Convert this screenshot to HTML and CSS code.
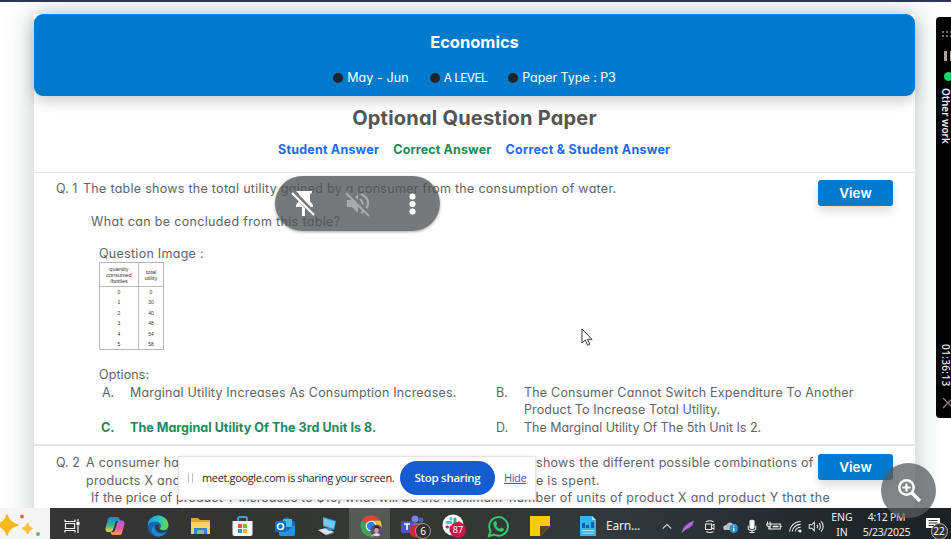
FILE: index.html
```html
<!DOCTYPE html>
<html lang="en">
<head>
<meta charset="utf-8">
<title>Economics – Optional Question Paper</title>
<link rel="stylesheet" href="styles.css">
</head>
<body>
<div class="screen">
  <div class="topline"></div>
  <main class="viewport">
    <article class="paper">
      <header class="banner">
        <h1>Economics</h1>
        <ul class="meta">
          <li class="m1"><span>May - Jun</span></li>
          <li class="m2"><span>A LEVEL</span></li>
          <li class="m3"><span>Paper Type : P3</span></li>
        </ul>
      </header>
      <section class="intro">
        <h2><span>Optional Question Paper</span></h2>
        <div class="legend">
          <span class="blue l1">Student Answer</span>
          <span class="green l2">Correct Answer</span>
          <span class="blue l3">Correct &amp; Student Answer</span>
        </div>
      </section>
      <section class="question">
        <div class="qhead">
          <span class="num n1">Q. 1</span>
          <div class="qtext"><p><span class="t1">The table shows the total utility gained by a consumer from the consumption of water.</span></p>
          <p class="sub"><span class="t2">What can be concluded from this table?</span></p></div>
          <button class="view">View</button>
        </div>
        <div class="qbody">
          <p class="label"><span class="t3">Question Image :</span></p>
          <div class="figure">
            <div class="fcol"><div class="fh">quantity<br>consumed<br>/bottles</div><i>0</i><i>1</i><i>2</i><i>3</i><i>4</i><i>5</i></div>
            <div class="fcol"><div class="fh">total<br>utility</div><i>0</i><i>30</i><i>40</i><i>48</i><i>54</i><i>58</i></div>
          </div>
          <p class="optlabel"><span class="t4">Options:</span></p>
          <div class="options">
            <b class="key">A.</b><p><span class="oa">Marginal Utility Increases As Consumption Increases.</span></p>
            <b class="key">B.</b><p><span class="ob">The Consumer Cannot Switch Expenditure To Another</span><br><span class="ob2">Product To Increase Total Utility.</span></p>
            <b class="key right">C.</b><p class="right"><span class="oc">The Marginal Utility Of The 3rd Unit Is 8.</span></p>
            <b class="key">D.</b><p><span class="od">The Marginal Utility Of The 5th Unit Is 2.</span></p>
          </div>
        </div>
      </section>
      <section class="question second">
        <div class="qhead">
          <span class="num n2">Q. 2</span>
          <div class="qtext">
            <p class="split"><span class="s1">A consumer has</span><span class="s2">shows the different possible combinations of</span></p>
            <p class="split"><span class="s3">products X and</span><span class="s4">e is spent.</span></p>
            <p class="split third"><span class="s5">If the price of product Y increases to $10, what will be the maximum</span><span class="s6">number of units of product X and product Y that the</span></p>
          </div>
          <button class="view">View</button>
        </div>
      </section>
    </article>
  </main>

  <footer class="taskbar">
    <div class="sparkle"><svg width="50" height="31" viewBox="0 0 50 31"><path d="M7 7Q9 15 18 17Q9 19 7 27Q5 19-4 17Q5 15 7 7Z" fill="#f8b91b" stroke="#f8b91b" stroke-width="1.500" stroke-linejoin="round"/><path d="M27.500 15Q28.500 19 32.500 20.500Q28.500 22 27.500 26Q26.500 22 22 20.500Q26.500 19 27.500 15Z" fill="#f8c13b" stroke="#f8c13b" stroke-linejoin="round"/><circle cx="22" cy="8.500" r="2" fill="#e66a42"/><circle cx="38" cy="26" r="2" fill="#6cb75a"/></svg></div>
    <div class="app"><svg width="18" height="18" viewBox="0 0 18 18" fill="none" stroke="#f2f2f2" stroke-width="1.200"><path d="M2 2.500V4.500H12V2.500M2 15.500V13.500H12V15.500M2.500 6.500H11.500V11.500H2.500ZM15 2V4.500M15 8.500V16"/><rect x="14" y="5.500" width="2" height="2" fill="#fff"/></svg></div>
    <div class="app"><svg width="22" height="22" viewBox="0 0 22 22"><defs><linearGradient id="ca" x1="0" y1="0" x2="0" y2="1"><stop stop-color="#1687dc"/><stop offset=".55" stop-color="#35b58a"/><stop offset="1" stop-color="#f4d22e"/></linearGradient><linearGradient id="cb" x1="0" y1="0" x2="0" y2="1"><stop stop-color="#a463eb"/><stop offset=".55" stop-color="#e85aa0"/><stop offset="1" stop-color="#ff9a53"/></linearGradient></defs><path d="M6 2H13Q15 2 15.500 4L16 6H12L9 15Q8 17 6 17H4Q1 17 1.500 13L4 4Q4.500 2 6 2Z" fill="url(#ca)"/><path d="M16 20H9Q7 20 6.500 17H9Q10.500 17 11 15L13.500 7Q14 5.500 16 5.500H18Q21 6 20.500 9L18 18Q17.500 20 16 20Z" fill="url(#cb)"/></svg></div>
    <div class="app"><svg width="22" height="22" viewBox="0 0 22 22"><defs><linearGradient id="ea" x1="0" y1="0" x2="1" y2=".2"><stop stop-color="#1b9be3"/><stop offset=".5" stop-color="#24c0d2"/><stop offset="1" stop-color="#64d64e"/></linearGradient></defs><circle cx="11" cy="11" r="10.500" fill="#1266b8"/><path d="M.7 10C1.500 4 6 .5 11 .5C17 .5 21.500 5 21.500 10C21.500 13.500 19 15 16 15C13 15 12.500 13.500 13.500 12.500C15 10 12.500 6.500 8.500 6.500C5 6.500 2 7.500.7 10Z" fill="url(#ea)"/><path d="M8 10C6 14 9 18.500 14 18.500C16.500 18.500 18 18 19.500 17C17 21 13 21.800 10 21.400C4 20 3 12 8 10Z" fill="#198bd2"/><path d="M8.500 10C7.500 14 10 17.500 14.500 17.500Q17.500 17.500 20 16L19.500 15Q16 16.500 13.500 15Q11 13 12 10Z" fill="#343733"/></svg></div>
    <div class="app"><svg width="21" height="19" viewBox="0 0 21 19"><path d="M1 1H8L10 3H20V17H1Z" fill="#dfa52e"/><path d="M1 5H20V17H1Z" fill="#fbd365"/><path d="M4 17V11H17V17H14V13.500H7V17Z" fill="#3088d0"/><path d="M7 14H14V17H7Z" fill="#76b8e8"/></svg></div>
    <div class="app"><svg width="21" height="21" viewBox="0 0 21 21"><path d="M6 6V2.500Q6 1 8 1H13Q15 1 15 2.500V6" fill="none" stroke="#39a6e6" stroke-width="1.800"/><path d="M.5 5H20.500V18Q20.500 20 18.500 20H2.500Q.5 20 .5 18Z" fill="#f5f5f5"/><path fill="#ed5333" d="M6 8h4v4H6z"/><path fill="#80b938" d="M11 8h4v4h-4z"/><path fill="#1d9ce5" d="M6 13h4v4H6z"/><path fill="#f8b61b" d="M11 13h4v4h-4z"/></svg></div>
    <div class="app"><svg width="22" height="21" viewBox="0 0 22 21"><path d="M6 5L13 1L21 6V18Q21 20 19 20H7Q5 20 5 18Z" fill="#1269bd"/><path d="M9 3H18V11H9Z" fill="#48b8ed"/><path d="M5 11L13 15L21 9V18Q21 20 19 20H7Q5 20 5 18Z" fill="#2295df"/><rect x="1" y="5" width="11" height="11" rx="1.500" fill="#106bbd"/><circle cx="6.500" cy="10.500" r="3" fill="none" stroke="#fff" stroke-width="1.700"/></svg></div>
    <div class="app"><svg width="22" height="20" viewBox="0 0 22 20"><path d="M6 1L19 5L17 14L6 10Z" fill="#3cade4"/><path d="M7 2.500L18 6L16.500 12.500L7 9Z" fill="#6bccf6"/><path d="M1 14L9 12L17 16L9 19Z" fill="#dbe4ea"/><path d="M9 19L17 16V17L9 19.500Z" fill="#7d8b96"/><path d="M8 12H13L15 14L12 15Z" fill="#338dca"/></svg></div>
    <div class="app active"><svg width="24" height="24" viewBox="0 0 24 24"><circle cx="11" cy="12" r="10.500" fill="#35a853"/><path d="M11 12L1.900 6.700A10.500 10.500 0 0 1 20.100 6.700H11Z" fill="#e94235"/><path d="M11 6.700H20.200A10.500 10.500 0 0 1 11 22.500L15.600 14.500Z" fill="#fbc02d"/><circle cx="11" cy="12" r="5.300" fill="#fff"/><circle cx="11" cy="12" r="4.200" fill="#327de6"/><circle cx="16.500" cy="16.500" r="6" fill="#574d80"/><path d="M12.500 21Q16.500 17 20.500 21Q17 23.500 12.500 21Z" fill="#e5d8e7"/><ellipse cx="16.500" cy="16" rx="2.200" ry="3" fill="#d7a084"/><path d="M14 15Q14 11.500 17 12Q19.500 12 19 15Q17 13 14 15Z" fill="#272130"/></svg></div>
    <div class="app teams"><svg width="30" height="24" viewBox="0 0 30 24"><circle cx="16" cy="5" r="3.500" fill="#7b83eb"/><circle cx="22" cy="6" r="2.500" fill="#5059c9"/><path d="M10 9H24V15Q23 20 17 20Q11 20 10 15Z" fill="#6870d5"/><rect x="2" y="7" width="12" height="12" rx="1" fill="#4b53bc"/><path d="M5 10H11M8 10V16" stroke="#fff" stroke-width="1.600"/><circle cx="17" cy="17" r="6.500" fill="#cf2936"/></svg><span class="count">6</span></div>
    <div class="app slack"><svg width="24" height="24" viewBox="0 0 24 24"><circle cx="11" cy="11" r="10.500" fill="#fff"/><g fill="none" stroke-width="3" stroke-linecap="round"><path d="M5 8.500H9M9 4.500V5" stroke="#36c5f0"/><path d="M13 5V9M17 8.500V9" stroke="#2eb67d"/><path d="M13 13H17M13 17V17.500" stroke="#ecb22e"/><path d="M9 13V17M5 13H5.500" stroke="#e01e5a"/></g></svg><span class="count red">87</span></div>
    <div class="app"><svg width="23" height="23" viewBox="0 0 23 23"><path d="M2 21L3.500 16A9.300 9.300 0 1 1 7 19.500Z" fill="none" stroke="#2fcc65" stroke-width="2"/><path d="M7.500 6.300L9 6L10.200 9L9 10.500Q10.500 13 13 14L14.300 12.500L17 14Q16.500 17 14 16.700Q8 16 6.300 9.500Q6 7.500 7.500 6.300Z" fill="#2fcc65"/></svg></div>
    <div class="app"><svg width="20" height="20" viewBox="0 0 20 20"><path d="M0 0H20V10L10 20H0Z" fill="#fccc0b"/><path d="M10 20V10H20Z" fill="#554719"/></svg></div>
    <div class="news"><svg width="18" height="22" viewBox="0 0 18 22"><path d="M1 1H13L17 5V21H1Z" fill="#35b4ed"/><path d="M13 1V5H17Z" fill="#a6e3fb"/><path d="M3 13V8H6V13ZM7 13V10H10V13ZM12 13V7H15V13Z" fill="#0f5eaa"/><path d="M3 15.500H15M3 18H15" stroke="#a3e1fc"/></svg><span>Earn...</span></div>
    <div class="tray">
      <svg class="i1" viewBox="0 0 20 20"><path d="M5 12.500L10 7.500L15 12.500"/></svg>
      <svg class="i2" viewBox="0 0 20 20"><path d="M3 17Q4 8 17 3Q17 11 7 14Z" fill="#a957cf" stroke="none"/><path d="M3 17L14 6" stroke="#d7a4ef" stroke-width=".8"/></svg>
      <svg class="i3" viewBox="0 0 20 20"><path d="M5.500 4.500Q10 2 14.500 4.500M5.500 16Q10 18 14.500 16M5 7H12V13.500H5ZM12 9L15 7.500V13L12 11.500"/></svg>
      <svg class="i4" viewBox="0 0 20 20"><path d="M2 14Q-1 9 5 8Q8 3 13 7Q18 7 18 12L14 14Z" fill="#b9c0c5" stroke="none"/><circle cx="13.500" cy="12.500" r="5" fill="#1f91d4" stroke="none"/><path d="M13.500 11.500V15.500M13.500 9V10.300" stroke="#fff" stroke-width="1.500"/></svg>
      <svg class="i5" viewBox="0 0 20 20"><rect x="7" y="2" width="6" height="11" rx="2" fill="#f4f4f4" stroke="none"/><path d="M5.500 9V12Q5.500 14.500 10 14.500Q14.500 14.500 14.500 12V9M10 14.500V17M7 17H13"/></svg>
      <svg class="i6" viewBox="0 0 20 20"><path d="M7 7H18V13H6V10M19 9V11M3 4V7M6 4V7M2 7H7Q7 10 4.500 10Q2 10 2 7ZM4.500 10V13H6"/><path d="M9 9H16V11H9Z" fill="#eee" stroke="none"/></svg>
      <svg class="i7" viewBox="0 0 20 20"><path d="M3 16A13 13 0 0 1 16 4M6 16A10 10 0 0 1 16 7.500M9.500 16A7 7 0 0 1 16 11M13 16A4 4 0 0 1 16 14"/><circle cx="15.500" cy="15.500" r="1" fill="#fff"/></svg>
      <svg class="i8" viewBox="0 0 20 20"><path d="M2 8H5L8 5V15L5 12H2ZM11 8Q13 10 11 12M13.500 6Q17 10 13.500 14M16 4Q21 10 16 16"/></svg>
      <div class="lang">ENG<br>IN</div>
      <div class="clock">4:12 PM<br>5/23/2025</div>
      <div class="notice"><svg width="15" height="15" viewBox="0 0 15 15"><path d="M0 1H14V11H10V14L7 11H0Z" fill="#fff"/><path d="M2.500 3.500H11.500M2.500 6H11.500M2.500 8.500H8" stroke="#333" stroke-width="1"/></svg><span>22</span></div>
    </div>
  </footer>

  <aside class="timer">
    <svg width="15" height="66" viewBox="0 0 15 66"><g fill="#77706b"><path d="M6 14h2v2H6zM10 14h2v2h-2zM14 14h2v2h-2zM6 18h2v2H6zM10 18h2v2h-2zM14 18h2v2h-2z"/></g><path d="M8 34h3v10H8zM14 34h3v10h-3z" fill="#aaa39e"/><circle cx="12.500" cy="59.500" r="4.500" fill="#13d86d"/></svg>
    <span class="task">Other work</span>
    <span class="elapsed">01:36:13</span>
    <svg class="close" width="15" height="18" viewBox="0 0 15 18"><path d="M7 4L17 14M7 14L17 4" stroke="#8b817b" stroke-width="1.300"/></svg>
  </aside>

  <div class="controls">
    <svg width="30" height="30" viewBox="0 0 30 30"><path d="M8 2H24V4L22 5V12L25 16V18H17V27H14V18H8V16L11 12V5Z" fill="#fff"/><path d="M4 2L27 26" stroke="#75777a" stroke-width="5"/><path d="M4 4L26 26" stroke="#fff" stroke-width="2.200"/></svg>
    <svg width="30" height="30" viewBox="0 0 30 30"><path d="M4 11H9L15 5V24L9 18H4Z" fill="#a8aaac"/><path d="M17 10Q22 14.500 17 19M18 5Q26 9 25 15Q24 21 18 24" fill="none" stroke="#a8aaac" stroke-width="2.300"/><path d="M4 2L28 26" stroke="#75777a" stroke-width="3"/><path d="M3 4L26 27" stroke="#a8aaac" stroke-width="2"/></svg>
    <svg width="30" height="30" viewBox="0 0 30 30" fill="#fff"><circle cx="14.500" cy="7.500" r="3.100"/><circle cx="14.500" cy="15" r="3.100"/><circle cx="14.500" cy="22.500" r="3.100"/></svg>
  </div>

  <div class="share">
    <span class="grip"></span>
    <span class="msg">meet.google.com is sharing your screen.</span>
    <button>Stop sharing</button>
    <a>Hide</a>
  </div>
  <div class="zoom"><svg width="28" height="28" viewBox="0 0 28 28" fill="none" stroke="#fff"><circle cx="11.500" cy="10.500" r="7.200" stroke-width="2.500"/><path d="M16.500 15.500L25 24" stroke-width="3.400"/><path d="M11.500 6.500V14.500M7.500 10.500H15.500" stroke-width="2.200"/></svg></div>
  <svg class="cursor" width="12" height="19" viewBox="0 0 12 19"><path d="M1 1V15L4.300 12L6.500 17.300L8.800 16.300L6.500 11.300H11Z" fill="#fff" stroke="#333" stroke-width="1"/></svg>
</div>
</body>
</html>
```

FILE: styles.css
```css
* { box-sizing: border-box; }
body { margin: 0; background: #fff; }
h1, h2, p, ul { margin: 0; padding: 0; }
button { border: 0; padding: 0; font: inherit; }
.screen {
  position: relative; width: 951px; height: 539px; overflow: hidden;
  display: grid; grid-template-rows: 2px 506px 31px;
  font-family: Inter, "Open Sans", sans-serif; font-feature-settings: "cv11";
  font-size: 12.5px; line-height: 17.7px; color: #616467;
}
.topline { background: #2b3654; }
.viewport { overflow: hidden; padding: 12px 36px 0 34px; }
.paper { background: #fff; height: 560px; width: 881px; box-shadow: 0 0 26px 2px rgba(60, 75, 75, .28); }

.banner {
  height: 82px; border-radius: 9px; background: #007acc; color: #fff; position: relative;
  box-shadow: 0 5px 14px rgba(0, 0, 0, .2); border-top: 1px solid #0787dd;
  display: flex; flex-direction: column; align-items: center;
}
.banner h1 { font-size: 16.5px; line-height: 20px; font-weight: 700; margin-top: 17px; }
.meta { display: flex; list-style: none; margin-top: 17px; line-height: 18px; gap: 21px; }
.meta li { display: flex; align-items: center; gap: 4px; white-space: nowrap; }
.meta li::before { content: ""; width: 10px; height: 10px; border-radius: 50%; background: #212529; }
.m1 { letter-spacing: .1px; }
.m2 { letter-spacing: -.65px; font-size: 12px; }
.m3 { letter-spacing: -.05px; }

.intro { height: 77px; border-bottom: 1px solid #e3e5e6; text-align: center; padding-top: 9px; }
.intro h2 { font-size: 20px; line-height: 26px; font-weight: 700; color: #555; letter-spacing: .22px; }
.legend { display: flex; gap: 14px; padding-left: 244px; margin-top: 10px; font-weight: 700; white-space: nowrap; }
.l1 { letter-spacing: .21px; }
.l2 { letter-spacing: .14px; }
.l3 { letter-spacing: .25px; }
.blue { color: #1c69f5; }
.green { color: #23875c; }

.question { height: 273px; border-bottom: 2px solid #e3e6e8; padding: 7px 22px 0; }
.qhead { display: grid; grid-template-columns: 27px 735px 75px; height: 56px; white-space: nowrap; }
.sub { padding: 15px 0 0 8px; }
.t1, .t3, .s1, .s2, .s3, .s4, .s6 { letter-spacing: .28px; }
.t2 { letter-spacing: .34px; }
.t4 { letter-spacing: .1px; }
.oa { letter-spacing: .19px; }
.ob { letter-spacing: .2px; }
.ob2 { letter-spacing: .12px; }
.oc { letter-spacing: .04px; }
.od { letter-spacing: -.02px; }
.s5 { letter-spacing: .13px; }
.view {
  width: 75px; height: 26px; border-radius: 3px; background: #007acc; color: #fff; padding-top: 1px;
  font-size: 13.5px; font-weight: 600; box-shadow: 0 5px 10px rgba(0, 0, 0, .14);
}
.qbody { padding-left: 43px; }
.label { padding-top: 9px; height: 26px; }
.figure {
  width: 65px; height: 88px; display: grid; grid-template-columns: 38px 1fr;
  border: 1px solid #b8b8b8; font: 5px/10.4px "Liberation Sans", sans-serif; text-align: center; color: #333;
}
.fcol + .fcol { border-left: 1px solid #bbb; }
.fh { height: 24px; font-size: 5.5px; line-height: 6px; border-bottom: 1px solid #bbb; display: flex; align-items: center; justify-content: center; padding-top: 1px; }
.fcol i { display: block; font-style: normal; }
.optlabel { margin-top: 16px; }
.options { display: grid; grid-template-columns: 31px 366px 28px 340px; white-space: nowrap; }
.key { font-weight: 400; padding-left: 3px; }
.key:nth-of-type(even) { padding-left: 0; }
.options .right { color: #23875c; font-weight: 700; }
.key.right { padding-left: 2px; }

.second { border: 0; padding-top: 8px; }
.second .qhead { grid-template-columns: 30px 732px 75px; }
.split { display: grid; grid-template-columns: 450px auto; }
.third { grid-template-columns: 418px auto; padding-left: 5px; }

.taskbar {
  background: linear-gradient(90deg, #343434, #343733 45%, #30383a 65%, #202729 90%, #1c2224);
  display: grid;
  grid-template-columns: 50px 43px 43px 43px 42px 43px 42px 43px 41px 44px 43px 42px 42px 96px 1fr;
  color: #eee; font-family: "Noto Sans", sans-serif;
}
.sparkle { background: #f5f5f5; }
.sparkle svg { display: block; }
.app { display: flex; align-items: center; justify-content: center; position: relative; padding-top: 4px; }
.active { background: #575957; padding-left: 4px; }
.teams { padding-left: 4px; }
.count {
  position: absolute; left: 25px; top: 15px; width: 16px; height: 16px; border-radius: 50%;
  border: 1px solid #999; background: #303030; color: #fff; font-size: 10px; line-height: 14px; text-align: center;
}
.count.red { left: 16px; top: 14px; border: 0; background: #c91646; font-size: 9px; line-height: 16px; }
.slack { padding-right: 4px; }
.news { display: flex; align-items: center; padding: 4px 0 0 18px; gap: 9px; font-size: 12px; letter-spacing: -.2px; }
.tray { display: flex; align-items: center; }
.tray > svg { width: 20px; height: 17px; margin-top: 4px; fill: none; stroke: #eee; stroke-width: 1.2; flex: none; }
.tray .i2, .tray .i3, .tray .i4 { width: 21.5px; }
.tray .i6 { width: 23px; }
.tray .i7 { width: 21px; }
.lang, .clock { font-size: 10.5px; line-height: 15px; text-align: center; padding-top: 2px; white-space: nowrap; }
.lang { width: 33px; }
.clock { width: 56px; letter-spacing: -.25px; }
.notice { position: relative; width: 36px; height: 31px; padding: 8px 0 0 11px; }
.notice span { position: absolute; left: 16px; top: 14px; width: 17px; height: 17px; border: 1px solid #bbb; border-radius: 50%; background: #333; font-size: 10px; line-height: 14px; text-align: center; color: #fff; }

.timer { position: absolute; left: 936px; top: 17px; width: 15px; height: 401px; background: #020202; border-radius: 4px 0 0 4px; color: #eee; font: 10px/10px "Noto Sans", sans-serif; }
.timer span { position: absolute; left: 5px; writing-mode: vertical-rl; white-space: nowrap; }
.timer svg { display: block; }
.task { top: 71px; font-weight: 600; }
.elapsed { top: 327px; letter-spacing: .35px; font-weight: 500; }
.timer .close { position: absolute; top: 377px; left: 0; }

.controls { position: absolute; left: 275px; top: 176px; width: 165px; height: 55px; border-radius: 28px; background: rgba(80, 82, 84, .78); box-shadow: 0 1px 3px rgba(0, 0, 0, .35); display: flex; align-items: center; gap: 25px; padding-left: 13px; }
.share { position: absolute; left: 178px; top: 456px; width: 358px; height: 44px; background: #fff; border: 1px solid #e4e4e4; box-shadow: 0 1px 4px rgba(0, 0, 0, .16); display: flex; align-items: center; color: #292929; font-family: "Open Sans", sans-serif; font-size: 11px; white-space: nowrap; }
.grip { width: 5px; height: 10px; border: solid #bbc0c7; border-width: 0 1px; margin-left: 9px; }
.msg { width: 198px; margin-left: 9px; letter-spacing: -.36px; }
.share button { width: 95px; height: 34px; border-radius: 17px; background: #155bd1; color: #fff; font-weight: 600; font-size: 11.5px; letter-spacing: -.3px; }
.share a { margin-left: 9px; color: #1a66c9; text-decoration: underline; letter-spacing: -.4px; }
.zoom { position: absolute; left: 881px; top: 463px; width: 55px; height: 55px; border-radius: 50%; background: rgba(88, 91, 94, .75); display: flex; align-items: center; justify-content: center; }
.cursor { position: absolute; left: 581px; top: 328px; }
```
